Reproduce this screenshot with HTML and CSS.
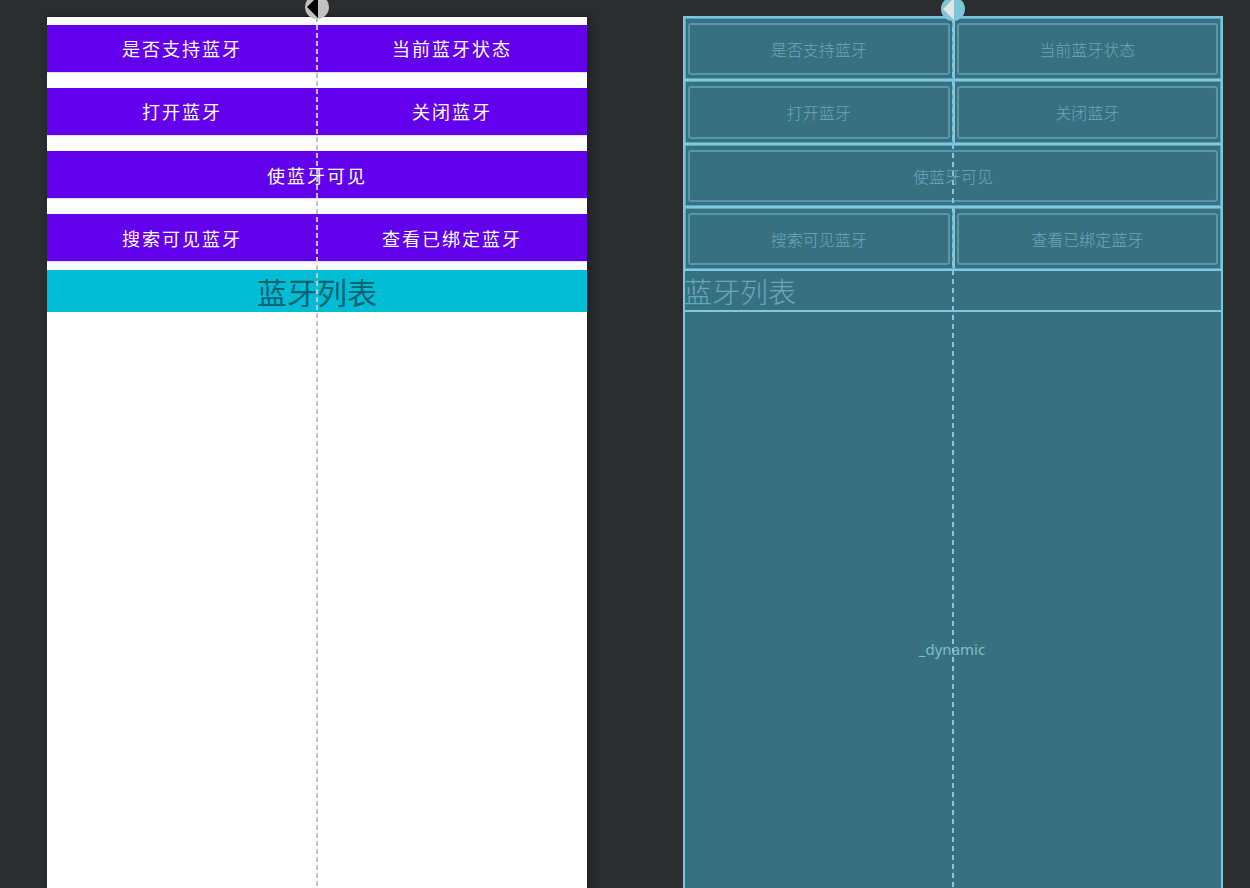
FILE: index.html
```html
<!DOCTYPE html>
<html>
<head>
<meta charset="utf-8">
<title>Layout editor</title>
<link rel="stylesheet" href="styles.css">
</head>
<body>
<div class="stage">
  <div class="phone design">
    <svg class="handle" width="26" height="26" viewBox="0 0 26 26"><circle cx="13" cy="13" r="12" fill="#c2c2c2"/><polygon points="3,13 14,2 14,24" fill="#000"/></svg>
    <div class="guide"></div>
    <div class="row"><div class="btn">是否支持蓝牙</div><div class="btn">当前蓝牙状态</div></div>
    <div class="row"><div class="btn">打开蓝牙</div><div class="btn">关闭蓝牙</div></div>
    <div class="row"><div class="btn">使蓝牙可见</div></div>
    <div class="row"><div class="btn">搜索可见蓝牙</div><div class="btn">查看已绑定蓝牙</div></div>
    <div class="title">蓝牙列表</div>
  </div>
  <div class="phone blueprint">
    <svg class="handle" width="26" height="26" viewBox="0 0 26 26"><circle cx="13" cy="13" r="12" fill="#7fc4d9"/><polygon points="3,13 14,2 14,24" fill="#e4e4e4"/></svg>
    <div class="guide"></div>
    <div class="row"><div class="cell"><div class="shape">是否支持蓝牙</div></div><div class="cell"><div class="shape">当前蓝牙状态</div></div></div>
    <div class="row"><div class="cell"><div class="shape">打开蓝牙</div></div><div class="cell"><div class="shape">关闭蓝牙</div></div></div>
    <div class="row"><div class="cell"><div class="shape">使蓝牙可见</div></div></div>
    <div class="row"><div class="cell"><div class="shape">搜索可见蓝牙</div></div><div class="cell"><div class="shape">查看已绑定蓝牙</div></div></div>
    <div class="title">蓝牙列表</div>
    <div class="list">_dynamic</div>
  </div>
</div>
</body>
</html>
```

FILE: styles.css
```css
html, body {
  margin: 0;
  padding: 0;
  height: 100%;
  overflow: hidden;
  background: #2c2d2f;
}

.stage {
  display: flex;
  gap: 96px;
  padding: 17px 0 0 47px;
}

.phone {
  position: relative;
  width: 540px;
  height: 971px;
  flex: none;
  box-sizing: border-box;
  display: flex;
  flex-direction: column;
}

.handle {
  position: absolute;
  top: -23px;
  left: 257px;
  z-index: 3;
}

.guide {
  position: absolute;
  top: 0;
  bottom: 0;
  left: 269px;
  width: 2px;
  z-index: 2;
}

/* ---------- design view ---------- */
.design {
  background: #ffffff;
  box-shadow: 3px 0 10px rgba(0, 0, 0, 0.35);
}

.design .guide {
  background: repeating-linear-gradient(to bottom, #c3c3c3 0 5px, transparent 5px 8px);
}

.design .row {
  display: flex;
  height: 63.25px;
  box-sizing: border-box;
  padding-top: 7.5px;
  flex: none;
}

.design .btn {
  flex: 1;
  height: 47px;
  background: #6200ee;
  color: #ffffff;
  font-family: "Noto Sans CJK SC", "Noto Sans", sans-serif;
  font-size: 18px;
  letter-spacing: 2px;
  display: flex;
  align-items: center;
  justify-content: center;
  box-shadow: 0 1px 1px rgba(0, 0, 0, 0.12);
}

.design .title {
  height: 42px;
  background: #00bcd4;
  color: #046470;
  font-family: "Noto Sans CJK SC", "Noto Sans", sans-serif;
  font-size: 30px;
  line-height: 42px;
  text-align: center;
  flex: none;
}

/* ---------- blueprint view ---------- */
.blueprint {
  background: #377180;
  border: 2px solid #7cc6dc;
  margin-top: -1px;
}

.blueprint .handle {
  left: 255px;
  top: -22px;
}

.blueprint .guide {
  left: 267px;
  background: repeating-linear-gradient(to bottom, #7ccbe2 0 5px, transparent 5px 9px);
}

.blueprint .row {
  display: flex;
  height: 63.25px;
  flex: none;
  box-sizing: border-box;
  border-bottom: 2px solid #7ec9df;
}

.blueprint .cell {
  flex: 1;
  box-sizing: border-box;
  border: 1px solid #5fa6bb;
  padding: 4px 2px 3px;
  display: flex;
}

.blueprint .cell + .cell {
  border-left: 2px solid #7ec9df;
}

.shape {
  flex: 1;
  border: 2px solid #5a96a6;
  border-radius: 3px;
  display: flex;
  align-items: center;
  justify-content: center;
  color: #6ba6b6;
  font-family: "Noto Sans CJK SC", "Noto Sans", serif;
  font-size: 16px;
  font-weight: 300;
}

.blueprint .title {
  height: 41px;
  flex: none;
  box-sizing: border-box;
  border-bottom: 2px solid #7ec9df;
  color: #6aa8b9;
  font-family: "Noto Sans CJK SC", "Noto Sans", sans-serif;
  font-size: 28px;
  font-weight: 300;
  line-height: 40px;
  margin-left: -1px;
}

.list {
  flex: 1;
  display: flex;
  align-items: center;
  justify-content: center;
  color: #7dbdd0;
  font-family: "Noto Sans", sans-serif;
  font-size: 15px;
  padding-right: 2px;
}
```
